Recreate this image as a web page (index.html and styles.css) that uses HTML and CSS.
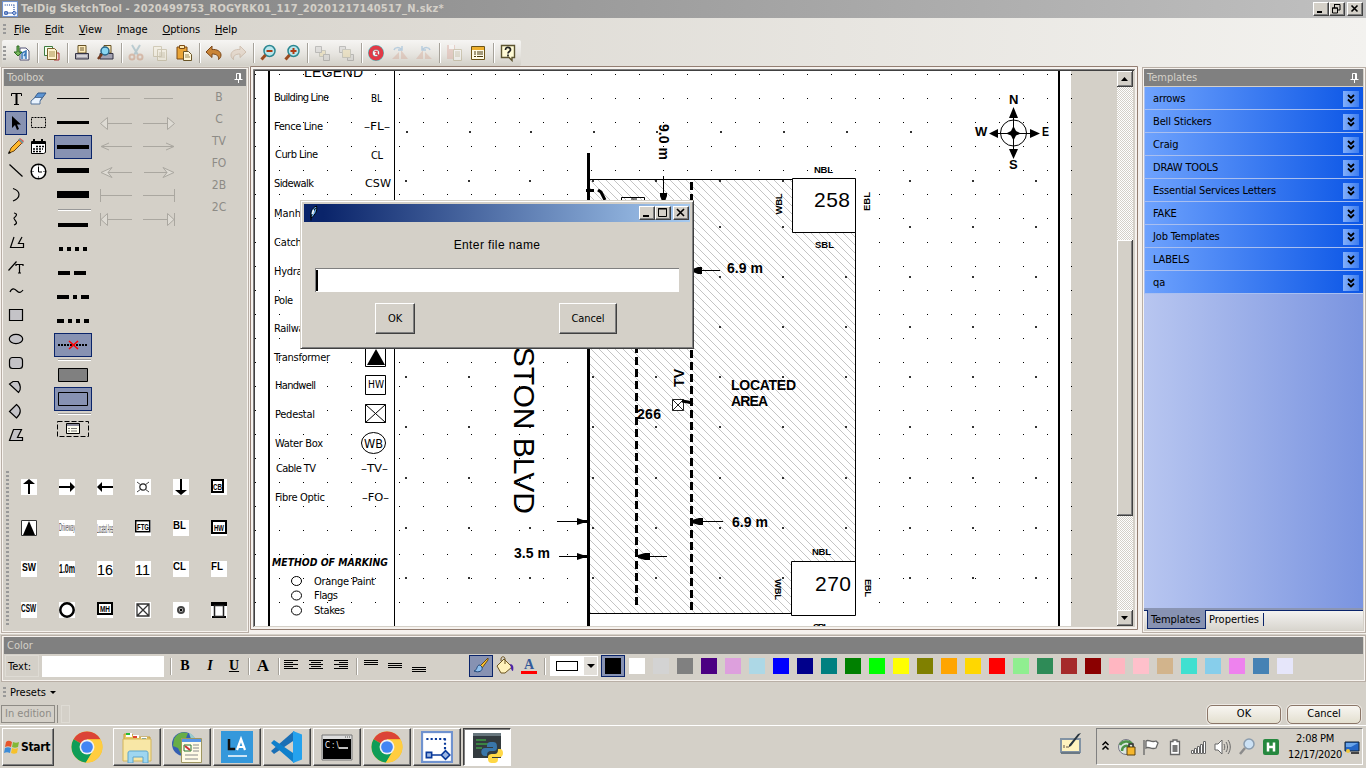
FILE: index.html
```html
<!DOCTYPE html>
<html lang="en">
<head>
<meta charset="utf-8">
<title>TelDig SketchTool</title>
<link rel="stylesheet" href="styles.css">
</head>
<body>
<svg class="defs" width="0" height="0">
  <defs>
    <symbol id="chev" viewBox="0 0 16 16"><path d="M5 4l3 3 3-3M5 8.500l3 3 3-3" fill="none" stroke="#000" stroke-width="1.800"/></symbol>
    <symbol id="pin" viewBox="0 0 9 10"><path d="M2.500 6V.500h4V6M5.500 1v5M.500 6.500h8M4.500 7v3" fill="none" stroke="#fff"/></symbol>
    <symbol id="chrome" viewBox="0 0 30 30"><circle cx="15" cy="15" r="14.500" fill="#fbc116"/><path d="M15 15L2.400 7.800A14.500 14.500 0 0 1 27.600 7.800H15z" fill="#db4437"/><path d="M15 15L2.400 7.800A14.500 14.500 0 0 0 14 29.500L21 18z" fill="#0f9d58"/><path d="M15 8h12.600A14.500 14.500 0 0 1 14 29.500L21 18z" fill="#ffcd40"/><circle cx="15" cy="15" r="7" fill="#f1f1f1"/><circle cx="15" cy="15" r="5.500" fill="#4285f4"/></symbol>
    <symbol id="sketch" viewBox="0 0 30 30"><path d="M0 0h30v30H0z" fill="#6f92cf"/><path d="M2 2h26v26H2z" fill="#fff"/><path d="M5 7.500h18M22.500 7v13" stroke="#0a3a9a" stroke-width="2" stroke-dasharray="2 2" fill="none"/><path d="M5 20h5v5H5zM10 22.500h9M19 22.500l4-4 4 4-4 4z" fill="#9db7e4" stroke="#0a3a9a" stroke-width="1.500"/></symbol>
  </defs>
</svg>
<header class="titlebar">
  <svg class="appicon" width="16" height="16"><use href="#sketch"/></svg>
  <span class="apptitle">TelDig SketchTool - 2020499753_ROGYRK01_117_20201217140517_N.skz*</span>
  <div class="wbtns">
    <svg class="wb" viewBox="0 0 14 12"><path d="M3 8h5v2H3z"/></svg>
    <svg class="wb" viewBox="0 0 14 12"><path d="M4.500 1v4M4 1.500h6V7H8M2.500 5h5v5h-5zM2 5h6" fill="none" stroke="#000"/></svg>
    <svg class="wb close" viewBox="0 0 14 12"><path d="M3.500 2.500l6 6M9.500 2.500l-6 6" stroke="#000" stroke-width="1.600"/></svg>
  </div>
</header>
<nav class="menubar"><i class="grip"></i><span><u>F</u>ile</span><span><u>E</u>dit</span><span><u>V</u>iew</span><span><u>I</u>mage</span><span><u>O</u>ptions</span><span><u>H</u>elp</span></nav>
<div class="toolrow"><div class="toolbar"><i class="grip tall"></i>
  <svg viewBox="0 0 18 18"><path d="M7 4h6l3 3v9H7z" fill="#fff" stroke="#557"/><path d="M9 15V9l4-2v8M13 9l-2 3" stroke="#3b78b8" stroke-width="1.500" fill="#cfe3f7"/><path d="M4 2v6H1l4 4 4-4H6V2z" fill="#79b85c" stroke="#2d6a22"/></svg><b class="sep"></b>
  <svg viewBox="0 0 18 18"><path d="M1.500 2.500h8v9h-8z" fill="#f2fff0" stroke="#3e7b3e"/><path d="M10 9h6v7h-5z" fill="#f6d6d6" stroke="#a33"/><path d="M4.500 4.500h7l2 2v9h-9z" fill="#fff3cf" stroke="#7b622a"/><path d="M6 8h6M6 10h6M6 12h6" stroke="#a89050"/></svg><b class="sep"></b>
  <svg viewBox="0 0 18 18"><path d="M5 1.500h8V9H5z" fill="#ffedbd" stroke="#665225"/><path d="M7 4h4M7 6h4" stroke="#6b5830"/><path d="M2.500 9.500h13V15h-13z" fill="#aaa8b2" stroke="#334"/><path d="M4 12h10" stroke="#fff"/></svg>
  <svg viewBox="0 0 18 18"><path d="M7 1.500h7V9H7z" fill="#ffedbd" stroke="#665225"/><path d="M3 9.500h13V15H3z" fill="#a3a3b3" stroke="#334"/><circle cx="8" cy="7" r="4" fill="#8ad6f2" stroke="#28678b" stroke-width="1.500"/><path d="M5 10l-4 5" stroke="#753c20" stroke-width="2.500"/></svg><b class="sep"></b>
  <svg class="dis" viewBox="0 0 18 18"><path d="M5 1l6 10M13 1L7 11" stroke="#6e9cae" stroke-width="2"/><circle cx="5" cy="13" r="2.500" fill="none" stroke="#c08060" stroke-width="2"/><circle cx="13" cy="13" r="2.500" fill="none" stroke="#c08060" stroke-width="2"/></svg>
  <svg class="dis" viewBox="0 0 18 18"><path d="M2.500 2.500h8v10h-8zM6.500 5.500h9v11h-9z" fill="#faf3dd" stroke="#a69970"/><path d="M8 9h6M8 11h6M8 13h6" stroke="#a69970"/></svg>
  <svg viewBox="0 0 18 18"><path d="M2 3h10v12H2z" fill="#eaa537" stroke="#7c4b15"/><path d="M4.500 1.500h5v3h-5z" fill="#ffe9ae" stroke="#7c4b15"/><path d="M8.500 7.500h5l3 3v6h-8z" fill="#fff8dc" stroke="#6a5527"/><path d="M10 11h4M10 13h5" stroke="#9b8855"/></svg><b class="sep"></b>
  <svg viewBox="0 0 18 18"><path d="M1 8l6-6v3.500c5-.500 9 2 9 5.500 0 2-1 3.500-2.500 4.500C14 12 12 10 7 10v3.500z" fill="#c98436" stroke="#7a4618"/></svg>
  <svg class="dis" viewBox="0 0 18 18"><path d="M17 8l-6-6v3.500C6 5 2 7.500 2 11c0 2 1 3.500 2.500 4.500C4 12 6 10 11 10v3.500z" fill="#ddc4ae" stroke="#a98465"/></svg><b class="sep"></b>
  <svg viewBox="0 0 18 18"><circle cx="10.500" cy="7" r="5.500" fill="#b9e6ec" stroke="#2b8791" stroke-width="1.500"/><path d="M7.500 7h6" stroke="#b03a12" stroke-width="2"/><path d="M6.500 11l-4 4.500" stroke="#9b4b1f" stroke-width="3"/></svg>
  <svg viewBox="0 0 18 18"><circle cx="10.500" cy="7" r="5.500" fill="#b9e6ec" stroke="#2b8791" stroke-width="1.500"/><path d="M7.500 7h6M10.500 4v6" stroke="#b03a12" stroke-width="2"/><path d="M6.500 11l-4 4.500" stroke="#9b4b1f" stroke-width="3"/></svg><b class="sep"></b>
  <svg class="dis" viewBox="0 0 18 18"><path d="M6.500 6.500h6v6h-6z" fill="#e8d69a" stroke="#998"/><path d="M2.500 2.500h6v6h-6zM10.500 10.500h6v6h-6z" fill="#ccc" stroke="#777"/></svg>
  <svg class="dis" viewBox="0 0 18 18"><path d="M2.500 2.500h6v6h-6zM10.500 10.500h6v6h-6z" fill="#ccc" stroke="#777"/><path d="M5.500 5.500h8v8h-8z" fill="#e8d69a" stroke="#998"/></svg><b class="sep"></b>
  <svg viewBox="0 0 18 18"><circle cx="9" cy="9" r="5.500" fill="none" stroke="#4fc4c4" stroke-width="5"/><circle cx="9" cy="9" r="5.500" fill="none" stroke="#e23946" stroke-width="4"/><circle cx="9" cy="9" r="2.800" fill="#fff"/><path d="M7.500 7.500h2.500v2.500H8M10 10l2 2" fill="none" stroke="#e23946" stroke-width="1.500"/></svg>
  <svg class="dis" viewBox="0 0 18 18"><path d="M1 15h7V8zM10 6v9h7z" fill="#d3a694"/><path d="M3 6c1-3 5-3 7-1M11 2v4H7" fill="none" stroke="#6aa0d0" stroke-width="1.500"/></svg>
  <svg class="dis" viewBox="0 0 18 18"><path d="M1 15h7V6zM10 8v7h7z" fill="#d3a694"/><path d="M15 6c-1-3-5-3-7-1M7 2v4h4" fill="none" stroke="#6aa0d0" stroke-width="1.500"/></svg><b class="sep"></b>
  <svg class="dis" viewBox="0 0 18 18"><path d="M2 1h8v14H2z" fill="#dba59a"/><path d="M4 1h5v4H4z" fill="#fff"/><path d="M8.500 5.500h8v11h-8z" fill="#fff" stroke="#a69970"/><path d="M10 8h5M10 10h5M10 12h5" stroke="#a69970"/></svg>
  <svg viewBox="0 0 18 18"><path d="M2.500 2.500h13v13h-13z" fill="#fffbe8" stroke="#6c5418"/><path d="M3 3h12v3H3z" fill="#eeb02d"/><path d="M5 8h2M8 8h6M5 10h2M8 10h6M5 12.500h2M8 12.500h6" stroke="#4a3a10"/></svg><b class="sep"></b>
  <svg viewBox="0 0 18 18"><path d="M2.500 1.500h13v12H13v3l-3-3H2.500z" fill="#fffbd6" stroke="#5c5430" stroke-width="1.400"/><path d="M6.500 6c0-4 5-3 5 0 0 1.500-2.500 1.500-2.500 3.500M9 10.500v2" fill="none" stroke="#222" stroke-width="1.700"/></svg>
</div></div>

<main class="work">
  <section class="panel left">
    <h2 class="phead"><span>Toolbox</span><svg class="pin"><use href="#pin"/></svg></h2>
    <div class="toolbox">
      <div class="tools">
        <svg viewBox="0 0 22 24"><path d="M6.500 9V6.500h10V9M9 17.500h5" fill="none" stroke="#000"/><path d="M11.500 6.500v11" stroke="#000" stroke-width="2"/></svg>
        <svg viewBox="0 0 22 24"><path d="M11 6h8l-6 8H5z" fill="#5c94d3" stroke="#345a8a"/><path d="M8 10.500h7l-2 3.500v3H4v-3z" fill="#e9f3ff" stroke="#56759b"/></svg>
        <svg class="on" viewBox="0 0 22 24"><path d="M7 5v12l3-3 2 5 2-1-2-4.500h4z"/></svg>
        <svg viewBox="0 0 22 24"><path d="M4.500 6.500h14v10h-14z" fill="none" stroke="#000" stroke-dasharray="2 1"/></svg>
        <svg viewBox="0 0 22 24"><path d="M4 18l2-5 8-8 3 3-8 8z" fill="#ffb72b" stroke="#694413"/><path d="M13 5l2-2 4 3-2 3z" fill="#e55353"/><path d="M14 4l4 4" stroke="#56aaa2" stroke-width="1.500"/><path d="M3 19l1-3 2 2z"/></svg>
        <svg viewBox="0 0 22 24"><path d="M4.500 6.500h14v11l-2 1h-12z" fill="#fff" stroke="#000"/><path d="M5 6h13v3H5z"/><path d="M7 4v3M15 4v3" stroke="#000" stroke-width="2"/><path d="M9 11.500h8M6 14h10M6 16.500h8" stroke="#000" stroke-width="1.500" stroke-dasharray="2 1"/></svg>
        <svg viewBox="0 0 22 24"><path class="ln" d="M4.500 5.500l13 12"/></svg>
        <svg viewBox="0 0 22 24"><circle cx="11.500" cy="12.500" r="7.300" fill="#fff" stroke="#000" stroke-width="1.500"/><path d="M11.500 8v5H15M11.500 6.500v1M11.500 17.500v1M5.500 12.500h1M16.500 12.500h1" fill="none" stroke="#000"/></svg>
        <svg viewBox="0 0 22 24"><path class="ln" d="M8 5.500c3 1 6 3 6 6s-2 5-6 6.500"/></svg><i></i>
        <svg viewBox="0 0 22 24"><path class="ln" d="M9 6c5 1 1 4 0 5s6 5 0 7"/></svg><i></i>
        <svg viewBox="0 0 22 24"><path class="ln" d="M9 6L5.500 16.500h13v-4h-5L17 6"/></svg><i></i>
        <svg viewBox="0 0 22 24"><path class="ln" d="M3.500 15.500l8-9M11 11V9.500h7V11M14.500 9.500V18M13 18h3"/></svg><i></i>
        <svg viewBox="0 0 22 24"><path class="ln" d="M5 13c2-5 5-3 7-1s4 2 6-1"/></svg><i></i>
        <svg viewBox="0 0 22 24"><path class="sh" d="M4.500 6.500h13v11h-13z"/></svg><i></i>
        <svg viewBox="0 0 22 24"><ellipse class="sh" cx="11" cy="12" rx="6.700" ry="4.700"/></svg><i></i>
        <svg viewBox="0 0 22 24"><rect class="sh" x="4.500" y="6.500" width="13" height="11" rx="3"/></svg><i></i>
        <svg viewBox="0 0 22 24"><path class="sh" d="M4.500 9l9 8.500c3-3 2-8-.500-11H8z"/></svg><i></i>
        <svg viewBox="0 0 22 24"><path class="sh" d="M4.500 12.500l7-7c5 4 5 9 0 13.500z"/></svg><i></i>
        <svg viewBox="0 0 22 24"><path class="sh" d="M8.500 6.500h8l-4 8h5v3h-13z"/></svg><i></i>
      </div>
      <div class="lines">
        <svg viewBox="0 0 38 24"><path d="M3 11.500h32" stroke="#000"/></svg>
        <svg viewBox="0 0 38 24"><path d="M3 10h32v3H3z"/></svg>
        <svg class="on" viewBox="0 0 38 24"><path d="M3 10h32v4H3z"/></svg>
        <svg viewBox="0 0 38 24"><path d="M3 9h32v5H3z"/></svg>
        <svg viewBox="0 0 38 24"><path d="M3 8h32v7H3z"/></svg>
        <hr>
        <svg viewBox="0 0 38 24"><path d="M4 10h30v4H4z"/></svg>
        <svg viewBox="0 0 38 24"><path d="M5 12h30" stroke="#000" stroke-width="4" stroke-dasharray="4 4"/></svg>
        <svg viewBox="0 0 38 24"><path d="M4 12h28" stroke="#000" stroke-width="4" stroke-dasharray="12 4"/></svg>
        <svg viewBox="0 0 38 24"><path d="M3 12h32" stroke="#000" stroke-width="4" stroke-dasharray="12 4 4 4"/></svg>
        <svg viewBox="0 0 38 24"><path d="M3 12h32" stroke="#000" stroke-width="4" stroke-dasharray="7 4 4 4 4 4 5"/></svg>
        <svg class="on" viewBox="0 0 38 24"><path d="M4 12h30" stroke="#000" stroke-width="2" stroke-dasharray="2 1"/><path d="M15 8l9 8M24 8l-9 8" stroke="#f00" stroke-width="1.600"/></svg>
        <hr>
        <svg viewBox="0 0 38 24"><path d="M4.500 5.500h29v13h-29z" fill="#808080" stroke="#000"/></svg>
        <svg class="on" viewBox="0 0 38 24"><path d="M4.500 5.500h29v13h-29z" fill="none" stroke="#000"/></svg>
        <hr>
        <svg viewBox="0 0 38 24"><path d="M3.500 4.500h31v15h-31z" fill="none" stroke="#000" stroke-dasharray="5 2"/><path d="M12.500 6.500h13v10h-13z" fill="#fffef0" stroke="#000"/><path d="M13 8h12" stroke="#889" stroke-width="2"/><path d="M14 11.500h2M17 11.500h6M14 14h2M17 14h6" stroke="#777"/></svg>
      </div>
      <div class="arrows">
        <svg viewBox="0 0 32 24"><path d="M1 11.500h29"/></svg><svg viewBox="0 0 32 24"><path d="M1 11.500h29"/></svg>
        <svg viewBox="0 0 32 24"><path d="M8 12.500h24M.500 12.500l7-6v12z"/></svg><svg viewBox="0 0 32 24"><path d="M0 12.500h24M31.500 12.500l-7-6v12z"/></svg>
        <svg viewBox="0 0 32 24"><path d="M1 11.500h31M9 8l-8 3.500L9 15" fill="none"/></svg><svg viewBox="0 0 32 24"><path d="M0 11.500h31M23 8l8 3.500-8 3.500" fill="none"/></svg>
        <svg viewBox="0 0 32 24"><path d="M8 13.500h24M1 13.500l11-5-4 5 4 5z"/></svg><svg viewBox="0 0 32 24"><path d="M1 13.500h23M31 13.500l-11-5 4 5-4 5z"/></svg>
        <svg viewBox="0 0 32 24"><path d="M1 12.500h31M.500 6v13"/></svg><svg viewBox="0 0 32 24"><path d="M0 12.500h31M31.500 6v13"/></svg>
        <svg viewBox="0 0 32 24"><path d="M8 12.500h24M.500 6v13M1 12.500l6.500-6v12z"/></svg><svg viewBox="0 0 32 24"><path d="M0 12.500h24M31.500 6v13M31 12.500l-6.500-6v12z"/></svg>
      </div>
      <div class="letters"><span>B</span><span>C</span><span>TV</span><span>FO</span><span>2B</span><span>2C</span></div>
    </div>
    <div class="stickers">
      <i class="grip long"></i>
      <div class="stk">
        <svg viewBox="0 0 16 16"><path d="M8 15V3" stroke="#000" stroke-width="2"/><path d="M2 5l6-5 6 5z"/></svg>
        <svg viewBox="0 0 16 16"><path d="M0 8h12" stroke="#000" stroke-width="2"/><path d="M11 3l5 5-5 5z"/></svg>
        <svg viewBox="0 0 16 16"><path d="M16 8H4" stroke="#000" stroke-width="2"/><path d="M5 3L0 8l5 5z"/></svg>
        <svg viewBox="0 0 16 16"><circle cx="8" cy="8" r="3.200" fill="none" stroke="#222" stroke-width="1.200"/><path d="M2 3l4 3M14 3l-4 3M2 13l4-3M14 13l-4-3" stroke="#444"/></svg>
        <svg viewBox="0 0 16 16"><path d="M8 0v12" stroke="#000" stroke-width="2"/><path d="M2 11h12l-6 5z"/></svg>
        <svg viewBox="0 0 16 16"><rect x="1" y="1" width="11" height="12" fill="#fff" stroke="#000" stroke-width="2"/><text x="2" y="11" textLength="9" lengthAdjust="spacingAndGlyphs" font-size="9">CB</text></svg>
        <svg viewBox="0 0 16 16"><path d="M.500.500h15v15H.500z" fill="#fff" stroke="#333"/><path d="M8 1l6 14H2z"/></svg>
        <svg viewBox="0 0 16 16"><text class="th" transform="translate(0 11) scale(.36 1)" font-size="11">Driveway</text></svg>
        <svg viewBox="0 0 16 16"><text class="th" transform="translate(0 13) scale(.23 1)" font-size="12">Located Area</text></svg>
        <svg viewBox="0 0 16 16"><rect x=".7" y=".7" width="14" height="11" fill="#fff" stroke="#000" stroke-width="1.500"/><text x="2" y="10" font-size="9" textLength="12" lengthAdjust="spacingAndGlyphs">FTG</text></svg>
        <svg viewBox="0 0 16 16"><text x="0" y="9" font-size="10" textLength="13" lengthAdjust="spacingAndGlyphs">BL</text></svg>
        <svg viewBox="0 0 16 16"><rect x="1" y="1" width="14" height="12" fill="#fff" stroke="#000" stroke-width="2"/><text x="3" y="11" font-size="9" textLength="10" lengthAdjust="spacingAndGlyphs">HW</text></svg>
        <svg viewBox="0 0 16 16"><text x="1" y="10" font-size="10" textLength="14" lengthAdjust="spacingAndGlyphs">SW</text></svg>
        <svg viewBox="0 0 16 16"><text x="0" y="12" font-size="12" textLength="16" lengthAdjust="spacingAndGlyphs">1.0m</text></svg>
        <svg viewBox="0 0 16 16"><text class="nb" x="0" y="14" font-size="14" textLength="16" lengthAdjust="spacingAndGlyphs">16</text></svg>
        <svg viewBox="0 0 16 16"><text class="nb" x="0" y="14" font-size="14" textLength="15" lengthAdjust="spacingAndGlyphs">11</text></svg>
        <svg viewBox="0 0 16 16"><text x="0" y="9" font-size="10" textLength="13" lengthAdjust="spacingAndGlyphs">CL</text></svg>
        <svg viewBox="0 0 16 16"><text x="0" y="9" font-size="10" textLength="12" lengthAdjust="spacingAndGlyphs">FL</text></svg>
        <svg viewBox="0 0 16 16"><text transform="translate(0 10) scale(.65 1)" font-size="10">CSW</text></svg>
        <svg viewBox="0 0 16 16"><circle cx="8" cy="8" r="6.700" fill="#fff" stroke="#000" stroke-width="2.500"/></svg>
        <svg viewBox="0 0 16 16"><rect x="1" y="1" width="14" height="11" fill="#fff" stroke="#000" stroke-width="2"/><text x="3" y="10" font-size="9" textLength="10" lengthAdjust="spacingAndGlyphs">MH</text></svg>
        <svg viewBox="0 0 16 16"><path d="M2 2h12v12H2zM2 2l12 12M14 2L2 14" fill="#fff" stroke="#333" stroke-width="1.300"/></svg>
        <svg viewBox="0 0 16 16"><circle cx="8" cy="8" r="3" fill="#ccc" stroke="#444" stroke-width="2"/><circle cx="8" cy="8" r="1.200"/></svg>
        <svg viewBox="0 0 16 16"><path d="M0 0h16v4H0zM1 14h14v2H1z"/><path d="M3.500 3.500h9v11h-9z" fill="#fff" stroke="#222" stroke-width="1.500"/></svg>
      </div>
    </div>
  </section>

  <section class="canvas">
    <svg class="draw" width="888" height="564" viewBox="250 66 888 564">
      <defs>
        <pattern id="dots" x="255" y="74" width="24" height="24" patternUnits="userSpaceOnUse"><path d="M0 0h1v1H0z"/></pattern>
        <pattern id="hatch" x="590" y="180" width="8" height="8" patternUnits="userSpaceOnUse"><path d="M0 0h1v1H0zM1 1h1v1H1zM2 2h1v1H2zM3 3h1v1H3zM4 4h1v1H4zM5 5h1v1H5zM6 6h1v1H6zM7 7h1v1H7z" fill="#c4c4c4"/></pattern>
        <pattern id="chk" width="2" height="2" patternUnits="userSpaceOnUse"><path d="M0 0h2v2H0z" fill="#fff"/><path d="M0 0h1v1H0zM1 1h1v1H1z" fill="#d4d0c8"/></pattern>
        <clipPath id="view"><path d="M254 71h863v555H254z"/></clipPath>
        <g id="brow"><path d="M405 0h2v2h-2zM468 0h2v2h-2zM529 0h2v2h-2zM592 0h2v2h-2zM655 0h2v2h-2zM719 0h2v2h-2zM782 0h2v2h-2zM845 0h2v2h-2zM909 0h2v2h-2z" fill="#333"/></g>
        <g id="brow2"><use href="#brow"/><path d="M972 0h2v2h-2zM1035 0h2v2h-2z" fill="#333"/></g>
      </defs>
      <path d="M250 66h888v564H250z" fill="#f6f2ee"/>
      <path d="M250.500 66.500h887v563h-887z" fill="none" stroke="#937e72"/>
      <path d="M253 69h882v558H253z" fill="#d4d0c8"/>
      <path d="M253.500 627V69.500H1135" fill="none" stroke="#808080"/>
      <path d="M254.500 626V70.500H1134" fill="none" stroke="#404040"/>
      <g clip-path="url(#view)">
        <path d="M255 71h816v555H255z" fill="#fff"/>
        <path d="M255 71h817v555H255z" fill="url(#dots)"/>
        <path d="M590 180h265v433H590z" fill="#fff"/><path d="M590 180h265v433H590z" fill="url(#hatch)"/>
        <use href="#brow" x="1" y="131"/>
        <use href="#brow2" y="180"/><use href="#brow2" y="226"/><use href="#brow2" y="276"/><use href="#brow2" y="326"/><use href="#brow2" y="376"/><use href="#brow2" y="426"/><use href="#brow2" y="477"/><use href="#brow2" y="527"/><use href="#brow2" y="577"/>
        <path d="M268 71h2v555h-2zM394 71h1v555h-1zM1058 71h2v555h-2z"/>
        <g class="legend">
          <text class="ar" x="304" y="77" font-size="14" textLength="59">LEGEND</text>
          <text x="274" y="101" textLength="55">Building Line</text><text x="371" y="102" textLength="11" lengthAdjust="spacingAndGlyphs">BL</text>
          <text x="274" y="130" textLength="49">Fence Line</text><text x="364" y="130" textLength="26" lengthAdjust="spacingAndGlyphs">–FL–</text>
          <text x="275" y="158" textLength="43">Curb Line</text><text x="371" y="159" textLength="12">CL</text>
          <text x="274" y="187" textLength="40">Sidewalk</text><text x="365" y="187" textLength="26" lengthAdjust="spacingAndGlyphs">CSW</text>
          <text x="274" y="217" textLength="42">Manhole</text>
          <text x="274" y="246" textLength="57">Catch Basin</text>
          <text x="274" y="275" textLength="38">Hydrant</text>
          <text x="274" y="304" textLength="19">Pole</text>
          <text x="274" y="332" textLength="36">Railway</text>
          <text x="274" y="361" textLength="56">Transformer</text>
          <text x="275" y="389" textLength="41">Handwell</text>
          <text x="275" y="418" textLength="40">Pedestal</text>
          <text x="275" y="447" textLength="48">Water Box</text>
          <text x="276" y="472" textLength="40">Cable TV</text><text x="361" y="472" textLength="27" lengthAdjust="spacingAndGlyphs">–TV–</text>
          <text x="275" y="501" textLength="50">Fibre Optic</text><text x="362" y="501" textLength="27" lengthAdjust="spacingAndGlyphs">–FO–</text>
          <path d="M365.500 345.500h20v21h-20z" fill="#fff" stroke="#000"/><path d="M376 349l9 16h-18z"/>
          <path d="M365.500 375.500h20v19h-20z" fill="#fff" stroke="#000"/><text x="368" y="388" textLength="16" lengthAdjust="spacingAndGlyphs">HW</text>
          <path d="M365.500 404.500h20v18h-20zl20 18M385.500 404.500l-20 18" fill="#fff" stroke="#000"/>
          <ellipse cx="373.500" cy="443" rx="12" ry="10.500" fill="#fff" stroke="#000"/><text x="364" y="448" textLength="19" lengthAdjust="spacingAndGlyphs" font-size="12">WB</text>
          <text x="272" y="566" textLength="116" lengthAdjust="spacingAndGlyphs" font-weight="bold" font-style="italic">METHOD OF MARKING</text>
          <g fill="#fff" stroke="#000"><ellipse cx="296.500" cy="581" rx="5" ry="4.500"/><ellipse cx="296.500" cy="595.500" rx="5" ry="4.500"/><ellipse cx="296.500" cy="610.500" rx="5" ry="4.500"/></g>
          <text x="314" y="585" textLength="61">Orange Paint</text><text x="314" y="599" textLength="24">Flags</text><text x="314" y="614" textLength="31">Stakes</text>
        </g>
        <path d="M587 153h3v473h-3z"/>
        <path d="M590 179.500h202M590 613.500h202M855.500 232v330" stroke="#000"/>
        <path d="M792.500 178.500h63v54h-63zM791.500 561.500h64v54h-64z" fill="#fff" stroke="#000"/>
        <path d="M691.500 182v428M636.500 345v263" stroke="#000" stroke-width="3" stroke-dasharray="8 4"/>
        <path d="M586 190.500h8M598 190l3 2 4 8" fill="none" stroke="#000" stroke-width="3"/>
        <path d="M621.500 205v-7.500h23V205M631 199h6" fill="none" stroke="#000"/>
        <g stroke="#000"><path d="M663.500 176v20M700 270.500h20M700 521.500h23M649 556.500h18M557 521.500h22M559 556.500h21"/></g>
        <path d="M660 193h7v3l-2 5h-3l-2-5zM702 267v7h-4l-5-2v-3l5-2zM703 518v7h-4l-7-2v-3l7-2zM650 553v7h-5l-7-2v-3l7-2zM577 518v7l6-2h5v-3h-5zM577 553v7l6-2h5v-3h-5z"/>
        <path d="M672.500 399.500h11v11h-11zl11 11M683.500 399.500l-11 11" fill="#fff" stroke="#222"/><path d="M682 401l6 1 4 1" fill="none" stroke="#000" stroke-width="3"/>
        <g class="ar bold" font-size="14">
          <text transform="translate(659 124) rotate(90)" textLength="36">9.0 m</text>
          <text x="727" y="273" textLength="36">6.9 m</text><text x="732" y="527" textLength="36">6.9 m</text><text x="514" y="558" textLength="36">3.5 m</text>
          <text x="731" y="390" textLength="65">LOCATED</text><text x="731" y="406" textLength="37">AREA</text><text x="637" y="419" textLength="24">266</text>
          <text transform="translate(684 387) rotate(-90)" textLength="18">TV</text>
        </g>
        <g class="ar" font-size="21"><text x="814" y="207" textLength="36">258</text><text x="815" y="591" textLength="36">270</text></g>
        <text class="ar" font-size="30" text-anchor="end" transform="translate(514 514) rotate(90)">WESTON BLVD</text>
        <g class="ar semi" font-size="9.500">
          <text x="814" y="173" textLength="19">NBL</text><text x="815" y="248" textLength="19">SBL</text><text x="812" y="555" textLength="19">NBL</text><text x="813" y="630" textLength="16">SBL</text>
          <text transform="translate(782 214.500) rotate(-90)" textLength="21">WBL</text><text transform="translate(870 211) rotate(-90)" textLength="19">EBL</text>
          <text transform="translate(775 579) rotate(90)" textLength="21">WBL</text><text transform="translate(865 579) rotate(90)" textLength="18">EBL</text>
        </g>
        <g><circle cx="1013.500" cy="133" r="13" fill="none" stroke="#000"/><path d="M1013.500 112v42M992 133.500h44" stroke="#000"/><path d="M1013.500 107l4.500 11h-9zM1013.500 159l4.500-10h-9zM989 133.500l9-4.500v9zM1040 133.500l-10-4.500v9zM1013.500 126l2.500 5 5 2.500-5 2-2.500 5-2.500-5-5-2 5-2.500z"/>
        <g class="ar bold" font-size="13"><text x="1009" y="104">N</text><text x="1009" y="169">S</text><text x="975" y="136">W</text><text x="1042" y="136" textLength="7" lengthAdjust="spacingAndGlyphs">E</text></g></g>
      </g>
      <path d="M1117 71h16v555h-16z" fill="url(#chk)"/>
      <g><path d="M1117 71h16v16h-16zM1117 240h16v276h-16zM1117 610h16v16h-16z" fill="#404040"/><path d="M1117 71h15v15h-15zM1117 240h15v275h-15zM1117 610h15v15h-15z" fill="#fff"/><path d="M1118 72h14v14h-14zM1118 241h14v274h-14zM1118 611h14v14h-14z" fill="#808080"/><path d="M1118 72h13v13h-13zM1118 241h13v273h-13zM1118 611h13v13h-13z" fill="#d4d0c8"/><path d="M1121 81h7l-3.500-4zM1121 616h7l-3.500 4z"/></g>
    </svg>
    <div class="dialog">
      <div class="dtitle"><svg class="feather" viewBox="0 0 12 16"><path d="M4 13C2 9 4 3 9 1c1 5-1 8-5 12z" fill="#6bb0ee" stroke="#000"/><path d="M3.500 15.500V11L8 3" fill="none" stroke="#000"/><path d="M6 5l-1 4" stroke="#fff" stroke-width="1.500"/></svg>
        <div class="wbtns"><svg class="wb" viewBox="0 0 14 12"><path d="M3 8h6v2H3z"/></svg><svg class="wb" viewBox="0 0 14 12"><path d="M2.500 1.500h8v8h-8zM2 2h9" fill="none" stroke="#000"/></svg><svg class="wb close" viewBox="0 0 14 12"><path d="M3 2l7 7M10 2L3 9" stroke="#000" stroke-width="1.600"/></svg></div></div>
      <p class="dlabel">Enter file name</p>
      <div class="entry"><i></i></div>
      <div class="dbtns"><button>OK</button><button class="c">Cancel</button></div>
    </div>
  </section>

  <section class="panel right">
    <h2 class="phead"><span>Templates</span><svg class="pin"><use href="#pin"/></svg></h2>
    <ul class="tpl">
      <li>arrows<svg><use href="#chev"/></svg></li><li>Bell Stickers<svg><use href="#chev"/></svg></li><li>Craig<svg><use href="#chev"/></svg></li><li>DRAW TOOLS<svg><use href="#chev"/></svg></li><li>Essential Services Letters<svg><use href="#chev"/></svg></li><li>FAKE<svg><use href="#chev"/></svg></li><li>Job Templates<svg><use href="#chev"/></svg></li><li>LABELS<svg><use href="#chev"/></svg></li><li>qa<svg><use href="#chev"/></svg></li>
    </ul>
    <div class="fill"></div>
    <div class="tabs"><span class="sel">Templates</span><span class="tab">Properties</span></div>
  </section>
</main>

<section class="panel colors">
  <h2 class="phead"><span>Color</span></h2>
  <div class="crow">
    <span class="tlabel">Text:</span><span class="tinput"></span><b class="sep s1"></b>
    <span class="f">B</span><span class="f it">I</span><span class="f un">U</span><b class="sep"></b><span class="f big">A</span><b class="sep s2"></b>
    <svg class="al" viewBox="0 0 24 24"><path d="M5 6.500h14M5 8.500h9M5 10.500h14M5 12.500h9M5 14.500h14" stroke="#000"/></svg>
    <svg class="al" viewBox="0 0 24 24"><path d="M5 6.500h14M7 8.500h10M5 10.500h14M7 12.500h10M5 14.500h14" stroke="#000"/></svg>
    <svg viewBox="0 0 24 24"><path d="M5 6.500h14M10 8.500h9M5 10.500h14M10 12.500h9M5 14.500h14" stroke="#000"/></svg><b class="sep s4"></b>
    <svg viewBox="0 0 24 24"><path d="M5 6.500h14M5 8.500h14M5 10.500h14" stroke="#000"/></svg>
    <svg viewBox="0 0 24 24"><path d="M5 9.500h14M5 11.500h14M5 13.500h14" stroke="#000"/></svg>
    <svg viewBox="0 0 24 24"><path d="M5 13.500h14M5 15.500h14M5 17.500h14" stroke="#000"/></svg><i class="gap"></i>
    <svg class="on" viewBox="0 0 24 22"><path d="M19 3l-8 8 2 2 6-8z" fill="#ffc52e" stroke="#6b4a10"/><path d="M11 10c-4 0-2 5-6 6 5 2 9 0 8-4z" fill="#8fc0ee" stroke="#234a7a"/></svg>
    <svg viewBox="0 0 24 22"><path d="M4 11l7-7 8 8-7 6H8z" fill="#fff2bb" stroke="#6b5420"/><path d="M12 9V4c0-3-4-3-4 0v2" fill="none" stroke="#6b5420"/><path d="M17 9c3 0 4 3 3 7-2 0-2-4-3-7z" fill="#4d24a8"/></svg>
    <span class="fa">A</span><b class="sep s3"></b>
    <span class="drop"><i></i><em></em></span>
    <div class="sw"><span class="on"><i style="background:#000"></i></span><span><i style="background:#fff"></i></span><span><i style="background:#d3d3d3"></i></span><span><i style="background:#808080"></i></span><span><i style="background:#4b0082"></i></span><span><i style="background:#dda0dd"></i></span><span><i style="background:#add8e6"></i></span><span><i style="background:#00f"></i></span><span><i style="background:#00008b"></i></span><span><i style="background:#008080"></i></span><span><i style="background:#008000"></i></span><span><i style="background:#0f0"></i></span><span><i style="background:#ff0"></i></span><span><i style="background:#808000"></i></span><span><i style="background:#ffa500"></i></span><span><i style="background:#ffd700"></i></span><span><i style="background:#f00"></i></span><span><i style="background:#90ee90"></i></span><span><i style="background:#2e8b57"></i></span><span><i style="background:#a52a2a"></i></span><span><i style="background:#8b0000"></i></span><span><i style="background:#ffb6c1"></i></span><span><i style="background:#ffc0cb"></i></span><span><i style="background:#d2b48c"></i></span><span><i style="background:#40e0d0"></i></span><span><i style="background:#87ceeb"></i></span><span><i style="background:#ee82ee"></i></span><span><i style="background:#4682b4"></i></span><span><i style="background:#e6e6fa"></i></span></div>
  </div>
</section>
<div class="presets"><i class="grip"></i><span>Presets</span><em></em></div>
<div class="status"><span class="ined">In edition</span><i></i><b></b><div class="okc"><button>OK</button><button>Cancel</button></div></div>

<footer class="taskbar">
  <div class="tb start"><svg width="16" height="18" viewBox="0 0 16 18"><path d="M2 4c2-2 4-1 6 0L7 9C5 8 3 8 1 9z" fill="#e6562c"/><path d="M9 4c2 1 4 1 6 0l-1 5c-2 1-4 1-6 0z" fill="#83b837"/><path d="M1 10c2-1 4-1 6 0l-1 5c-2-1-4-1-6 0z" fill="#3c8cd8"/><path d="M8 10c2 1 4 1 6 0l-1 5c-2 1-4 1-6 0z" fill="#f6c12c"/></svg>Start</div>
  <div class="tb flat"><svg><use href="#chrome"/></svg></div>
  <div class="tb"><svg viewBox="0 0 32 32"><path d="M3 3h8l2 3h16v23H3z" fill="#e8c860" stroke="#c39c3a"/><path d="M5 2h6v4H5zM12 4h6v3h-6zM20 6h6v3h-6z" fill="#fff"/><path d="M5 2h4v2H5z" fill="#2b3"/><path d="M12 5h4v2h-4z" fill="#d43"/><path d="M21 7h4v2h-4z" fill="#49c"/><path d="M2 8h28v22H2z" fill="#f8e7a6" stroke="#d3b558"/><path d="M7 32V22c0-2 2-2 2-2h16c2 0 2 2 2 2v10h-5v-6H12v6z" fill="#9ed6f0" stroke="#5ca5cc"/></svg></div>
  <div class="tb"><svg viewBox="0 0 32 32"><circle cx="13" cy="13" r="12" fill="#355fb1"/><path d="M3 8c4-7 9-7 14-6l-2 5 4 4-6 5 2 5-5 2-3-6-5-2z" fill="#68ad47"/><path d="M18 2c4 1 7 6 7 8l-5-2z" fill="#9cc"/><path d="M10.500 7.500h20v24h-20z" fill="#fffbe6" stroke="#9e9660"/><path d="M11 8h19v3H11z" fill="#5696e8"/><path d="M13 14h7v6h-7z" fill="#fff" stroke="#287428"/><path d="M14 15l5 4" stroke="#c33" stroke-width="2"/><path d="M22 14h6M22 17h6M22 20h6M14 24h13M14 28h13" stroke="#8a8a8a"/></svg></div>
  <div class="tb"><svg viewBox="0 0 32 32"><path d="M0 0h32v32H0z" fill="#3498db"/><path d="M8 8v10h6" fill="none" stroke="#111" stroke-width="2.500"/><path d="M16 19l4-11 4 11M17.500 16h5" fill="none" stroke="#fff" stroke-width="2.200"/><path d="M7 25h19" stroke="#fff" stroke-width="1.500"/></svg></div>
  <div class="tb"><svg viewBox="0 0 32 32"><path d="M23 0L0 20l3 3 22-15z" fill="#1b6fb5"/><path d="M23 32L0 12l3-3 22 15z" fill="#0f80cc"/><path d="M22 0l9 3.500v25L22 32z" fill="#25a2ee"/></svg></div>
  <div class="tb"><svg viewBox="0 0 32 32"><path d="M1 4h30v25H1z" fill="#ddd" stroke="#777"/><path d="M2 8h28v20H2z"/><path d="M24 6h5" stroke="#555" stroke-dasharray="1 1"/><text x="4" y="17" font-size="8" textLength="14" fill="#fff">C:\</text><path d="M18 17h9" stroke="#fff" stroke-width="1.500"/></svg></div>
  <div class="tb"><svg><use href="#chrome"/></svg></div>
  <div class="tb"><svg><use href="#sketch"/></svg></div>
  <div class="tb act"><svg viewBox="0 0 32 32"><path d="M2 2h28v25H2z" fill="#333b3f"/><path d="M2 2h28v3H2z" fill="#68777e"/><path d="M5 9h10M5 13h15M5 17h6" stroke="#3f9d45" stroke-width="1.500"/><path d="M21 11c-5 0-5 2-5 5h6v1h-8c-5 0-5 8 0 8h2c0-5 2-5 6-5 3 0 4-1 4-4 0-4-1-5-5-5z" fill="#3976a9"/><path d="M22 32c5 0 5-2 5-5h-6v-1h8c4 0 4-8 0-8h-2c0 5-2 5-5 5-4 0-5 1-5 4 0 4 1 5 5 5z" fill="#ffd846"/></svg></div>
  <svg class="pen" viewBox="0 0 22 22"><path d="M1 6h19v13H1z" fill="#fff3bf" stroke="#8293a4" stroke-width="2"/><path d="M4 12v3M6 14h3" stroke="#654"/><path d="M21 0L11 13l-2 1v-2L18 1z" fill="#26343f"/><path d="M1 20h19" stroke="#6a7884" stroke-width="2"/></svg>
  <div class="tray">
    <svg class="more" viewBox="0 0 18 20"><path d="M5.500 8l3-3 3 3M5.500 12.500l3-3 3 3" fill="none" stroke="#000" stroke-width="1.500"/></svg>
    <svg viewBox="0 0 24 20"><circle cx="11" cy="10" r="7.500" fill="#dce8e0" stroke="#778"/><path d="M5 8c2-4 9-5 12-1M7 14c0-5 5-7 8-3" fill="none" stroke="#4c9447" stroke-width="2.500"/><path d="M12 10h8v8h-8z" fill="#f5b62d" stroke="#5b4210"/><path d="M14 10V7h4v3" fill="none" stroke="#333" stroke-width="1.500"/></svg>
    <svg viewBox="0 0 24 20"><path d="M5 3v15M7 4c3-2 5 2 10 0l2 2-2 5c-5 2-7-2-10 0z" fill="#fff" stroke="#666" stroke-width="1.300"/></svg>
    <svg viewBox="0 0 24 20"><path d="M7.500 4.500H10V3h4v1.500h2.500v13h-9z" fill="#fff" stroke="#666" stroke-width="1.300"/><path d="M9.500 8h5v7h-5z" fill="#777"/></svg>
    <svg viewBox="0 0 24 20"><path d="M4.500 13.500h2v3h-2zM7.500 11.500h2v5h-2zM10.500 9.500h2v7h-2zM13.500 7.500h2v9h-2zM16.500 4.500h2v12h-2z" fill="#fff" stroke="#666"/></svg>
    <svg viewBox="0 0 24 20"><path d="M4 7h3l4-4v14l-4-4H4z" fill="#fff" stroke="#666"/><path d="M13 7c1 2 1 4 0 6M15 5c2 3 2 7 0 10M17 3c3 4 3 10 0 14" fill="none" stroke="#666"/></svg>
    <svg viewBox="0 0 24 20"><circle cx="14" cy="7" r="5" fill="#cce1f4" stroke="#8a9cae" stroke-width="1.500"/><path d="M10 11l-5 6" stroke="#8b8b8b" stroke-width="2.500"/></svg>
    <svg viewBox="0 0 24 20"><rect x="4" y="2" width="16" height="16" rx="2" fill="#26883f"/><path d="M9 5.500v9M15 5.500v9M9 10h6" stroke="#fff" stroke-width="2.500"/></svg>
    <div class="clock">2:08 PM<br>12/17/2020</div>
    <svg class="mon" viewBox="0 0 16 16"><path d="M1 3h14v9H1z" fill="#2466c6" stroke="#123" /><path d="M2 4h12l-7 4H2z" fill="#69a5ea"/><circle cx="4" cy="12" r="2" fill="#f0c83b"/><path d="M7 14h8" stroke="#444" stroke-width="2"/></svg>
  </div>
</footer>
</body>
</html>
```
FILE: styles.css
```css
* { box-sizing: border-box; }
body { margin: 0; width: 1366px; height: 768px; overflow: hidden; display: flex; flex-direction: column; background: #d4d0c8; font: 11px/14px "DejaVu Sans Condensed", "DejaVu Sans", sans-serif; font-stretch: condensed; color: #000; }
.defs { position: absolute; }
svg { display: block; flex: none; }
h2, p, ul { margin: 0; padding: 0; font-weight: normal; font-size: 11px; }
button { font: inherit; padding: 0; color: #000; }
.titlebar { flex: none; height: 18px; display: flex; align-items: center; background: linear-gradient(90deg, #808080, #c0c0c0); padding: 0 3px 0 2px; }
.apptitle { margin-left: 3px; color: #d4d0c8; font-weight: bold; flex: 1; letter-spacing: .2px; }
.wbtns { display: flex; margin-left: auto; }
.wb { width: 16px; height: 14px; background: #d4d0c8; border: 1px solid; border-color: #fff #404040 #404040 #fff; box-shadow: inset -1px -1px #808080; }
.wb.close { margin-left: 2px; }
.menubar { flex: none; height: 22px; display: flex; align-items: center; padding: 1px 0 0 3px; background: linear-gradient(90deg, #d4d0c8, #f3f2ef); letter-spacing: -.1px; }
.menubar span { margin-right: 15px; }
.menubar span:first-of-type { margin-left: 8px; }
.grip { width: 3px; height: 11px; background: repeating-linear-gradient(#999 0 2px, transparent 2px 4px); }
.grip.tall { height: 15px; margin-right: 4px; }
.grip.long { height: 155px; }
.toolrow { flex: none; height: 27px; background: linear-gradient(90deg, #d4d0c8, #f3f2ef); padding-left: 2px; }
.toolbar { width: 519px; height: 26px; display: flex; align-items: center; padding-left: 1px; background: linear-gradient(#f6f5f3, #e6e4df 55%, #d2cfc7); border-radius: 2px; }
.toolbar svg { width: 24px; height: 18px; }
.toolbar .dis { opacity: .4; }
.sep { width: 6px; height: 20px; flex: none; background: linear-gradient(90deg, transparent 3px, #a6a29a 3px 4px, #fff 4px 5px, transparent 5px); }
.work { flex: none; height: 567px; display: flex; background: #f5f1ed; }
.panel { border: 1px solid #b9afa6; box-shadow: inset 0 0 0 1px #f7f3ef; padding: 1px; background: #d4d0c8; display: flex; flex-direction: column; }
.phead { height: 17px; flex: none; background: #808080; color: #d4d0c8; display: flex; align-items: center; padding: 1px 4px 0 3px; justify-content: space-between; margin: 0 1px; }
.pin { width: 9px; height: 10px; }
.left { width: 248px; height: 566px; margin: 0 1px; padding-top: 1px; }
.left .phead { padding-right: 3px; }
.toolbox { height: 385px; display: flex; padding: 1px 0 0 2px; }
.tools { width: 44px; display: grid; grid-template-columns: 22px 22px; grid-auto-rows: 24px; height: 360px; }
.tools svg { width: 22px; height: 24px; }
.on { background: #8792b2; box-shadow: inset 0 0 0 1px #0a246a; }
.ln { fill: none; stroke: #000; stroke-width: 1.2; }
.sh { fill: #c4c3c7; stroke: #000; stroke-width: 1.2; }
.lines { width: 38px; margin-left: 5px; }
.lines svg { width: 38px; height: 24px; }
.lines hr { margin: 2px 1px 2px 4px; height: 2px; border: 0; border-top: 1px solid #999; border-bottom: 1px solid #fff; }
.arrows { display: grid; grid-template-columns: 32px 32px; grid-auto-rows: 24px; column-gap: 11px; margin-left: 8px; height: 144px; }
.arrows svg { width: 32px; height: 24px; fill: #dedbd4; stroke: #aaa7a0; }
.letters { margin: -1px 0 0 30px; width: 28px; text-align: center; color: #8d8b86; font-size: 12px; line-height: 22px; }
.letters span { display: block; }
.stickers { display: flex; padding-left: 3px; }
.stk { margin: 8px 0 0 12px; display: grid; grid-template-columns: repeat(6, 16px); column-gap: 22px; grid-auto-rows: 16px; row-gap: 25px; height: 140px; }
.stk svg { width: 16px; height: 16px; background: #fff; font-family: "Liberation Sans", Arial, sans-serif; font-weight: bold; }
.stk .th { font-weight: normal; fill: #444; }
.stk .nb { font-weight: normal; }
.canvas { position: relative; width: 888px; height: 564px; margin-top: -1px; }
.legend { font-size: 11px; }
.ar { font-family: "Liberation Sans", Arial, sans-serif; }
.bold { font-weight: bold; }
.semi { font-weight: bold; }
.dialog { position: absolute; left: 50px; top: 134px; width: 394px; height: 149px; background: #d4d0c8; border: 1px solid; border-color: #d4d0c8 #404040 #404040 #d4d0c8; box-shadow: inset 1px 1px #fff, inset -1px -1px #808080; padding: 3px; display: flex; flex-direction: column; }
.dtitle { height: 18px; flex: none; background: linear-gradient(90deg, #0a246a 5%, #a6caf0); display: flex; align-items: center; padding: 0 1px 0 3px; }
.feather { width: 13px; height: 16px; }
.dlabel { font: 12px/16px "Liberation Sans", Arial, sans-serif; text-align: center; letter-spacing: .4px; margin-top: 15px; }
.entry { margin: 15px 11px 0; height: 24px; background: #fff; border-top: 1px solid #808080; border-left: 1px solid #808080; padding: 1px 0; }
.entry i { display: block; width: 2px; height: 21px; background: #000; }
.dbtns { margin: 11px 0 0 71px; display: flex; gap: 144px; }
.dbtns button { width: 40px; height: 31px; padding-top: 1px; background: #d4d0c8; border: 1px solid; border-color: #fff #404040 #404040 #fff; box-shadow: inset -1px -1px #808080; letter-spacing: -.1px; }
.dbtns .c { width: 58px; }
.right { width: 224px; height: 566px; margin-left: 4px; }
.right .phead { margin-left: 0; }
.tpl { list-style: none; margin: 1px 1px 0 0; background: #a9bff0; letter-spacing: -.15px; }
.tpl li { height: 22px; margin: 0 0 1px 1px; padding: 1px 4px 0 8px; display: flex; align-items: center; justify-content: space-between; background: linear-gradient(90deg, #6ea2fd, #0b56e6); }
.tpl svg { width: 16px; height: 16px; background: linear-gradient(90deg, #83b0fb, #3d7df0); }
.fill { flex: 1; margin: 0 1px 0 0; background: linear-gradient(90deg, #b8c6f0, #7a94e0); }
.tabs { height: 22px; margin: 0 1px 1px 0; display: flex; background: linear-gradient(#f5f4f2, #d8d5ce); border-top: 2px solid #8a95b4; line-height: 19px; box-shadow: inset 0 1px #0a246a; padding-left: 3px; }
.tabs .sel { background: #8792b2; border: 1px solid #0a246a; border-top: 0; width: 59px; height: 19px; padding-left: 3px; white-space: nowrap; letter-spacing: -.1px; }
.tabs .tab { padding-left: 3px; padding-right: 4px; height: 13px; margin-top: 3px; line-height: 14px; border-right: 1px solid #0a246a; }
.colors { flex: none; height: 47px; margin: 1px 0 0 1px; padding-top: 1px; }
.crow { height: 28px; display: flex; align-items: center; padding-left: 2px; padding-bottom: 2px; }
.crow > * { flex: none; }
.tlabel { width: 34px; height: 22px; padding: 4px 2px; border: 1px solid #dedbd4; white-space: nowrap; }
.tinput { width: 122px; height: 21px; margin-left: 3px; background: #fff; }
.crow .sep { height: 17px; margin-left: -1px; }
.crow .s1 { margin-left: 3px; }
.crow .s2, .crow .s3, .crow .s4 { margin-left: 0; }
.f { width: 24px; text-align: center; font: bold 14px/20px "Liberation Serif", serif; }
.it { font-style: italic; margin-left: 1px; }
.un { text-decoration: underline; }
.big { font-size: 17px; }
.crow > svg { width: 24px; height: 24px; }
.crow > svg.on { height: 22px; }
.crow .al { margin-right: 1px; }
.s2 + .al { margin-left: -2px; }
.gap { width: 38px; }
.fa { width: 16px; margin: 0 4px; text-align: center; border-bottom: 3px solid red; font: bold 14px/14px "Liberation Serif", serif; color: #345a9a; height: 16px; }
.drop { width: 48px; height: 20px; background: #fff; display: flex; align-items: center; margin: 0 3px; }
.drop i { width: 22px; height: 10px; border: 1px solid #000; margin-left: 6px; }
.drop em { width: 13px; height: 18px; margin-left: 6px; background: #e2dfd9; display: flex; }
.drop em::after, .presets em::after { content: ""; border: 4px solid transparent; border-top-color: #000; border-bottom: 0; margin: auto; }
.sw { display: flex; }
.sw span { width: 24px; height: 22px; display: flex; }
.sw i { width: 16px; height: 16px; margin: auto; }
.presets { flex: none; height: 21px; display: flex; align-items: center; padding-left: 3px; }
.presets span { margin: 0 4px; }
.presets em { display: flex; }
.presets em::after { border-width: 3px 3px 0; }
.status { flex: none; height: 22px; display: flex; align-items: center; padding: 0 5px 0 1px; }
.ined { border: 1px solid #8e8b85; color: #8d8b86; width: 54px; height: 18px; line-height: 16px; padding-left: 3px; white-space: nowrap; }
.status i { width: 1px; height: 18px; background: #8e8b85; margin: 0 3px 0 2px; }
.status b { width: 9px; height: 18px; border: 1px solid #dedbd4; }
.okc { margin-left: auto; display: flex; gap: 6px; }
.okc button { width: 74px; height: 19px; border: 1px solid #8b7668; border-radius: 5px; background: linear-gradient(#f8f6f2, #e3dfcf); box-shadow: 0 0 0 1px #ece9e4; }
.taskbar { flex: 1; border-top: 1px solid #fff; display: flex; padding: 2px 3px 0 2px; align-items: flex-start; }
.tb { width: 48px; height: 38px; margin-right: 2px; border: 1px solid; border-color: #fff #404040 #404040 #fff; box-shadow: inset -1px -1px #808080; display: flex; align-items: center; justify-content: center; }
.tb svg { width: 32px; height: 32px; }
.start { width: 52px; font-weight: bold; font-size: 12px; letter-spacing: -.3px; justify-content: flex-start; padding-left: 1px; }
.start svg { width: 16px; height: 18px; margin-right: 1px; }
.flat { border-color: transparent; box-shadow: none; margin: 0 2px 0 7px; }
.act { background: #fff; border-color: #404040 #fff #fff #404040; box-shadow: inset 1px 1px #808080; }
.pen { width: 22px; height: 22px; margin: 5px 14px 0 auto; }
.tray { width: 267px; height: 37px; border: 1px solid; border-color: #808080 #fff #fff #808080; display: flex; align-items: center; }
.tray svg { width: 24px; height: 20px; }
.tray .more { width: 18px; }
.clock { width: 56px; text-align: center; line-height: 16px; margin-left: 4px; white-space: nowrap; letter-spacing: -.3px; }
.tray .mon { width: 16px; height: 16px; margin-left: 1px; }
```
